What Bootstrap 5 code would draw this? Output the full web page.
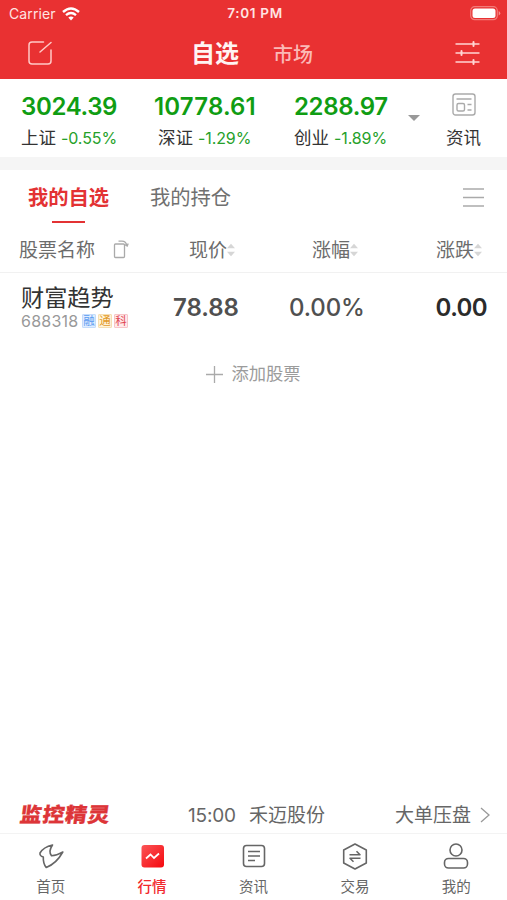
<!DOCTYPE html>
<html lang="zh-CN">
<head>
<meta charset="utf-8">
<meta name="viewport" content="width=device-width, initial-scale=1">
<title>自选</title>
<link href="https://cdn.jsdelivr.net/npm/bootstrap@5.3.0/dist/css/bootstrap.min.css" rel="stylesheet">
<style>
  body { font-family: Inter, "Noto Sans CJK SC", sans-serif; color: #333; height: 900px; overflow: hidden; white-space: nowrap; }
  svg { display: block; flex: none; fill: none; }
  .top-red { background: #e93132; height: 79px; }
  .status { height: 27px; padding: 0 6px 0 9px; font-size: 14px; line-height: 27px; color: #ffe4e2; }
  .status > * { flex: 1 1 0; }
  .carrier { width: 53px; letter-spacing: .1px; }
  .clock { font-weight: 600; font-size: 13.5px; letter-spacing: .7px; }
  .titlebar { height: 52px; padding: 0 27px 0 28px; line-height: 52px; }
  .title-on { font-size: 24px; font-weight: 700; margin-left: 139px; width: 82px; color: #fff4f3; padding-top: 2px; }
  .title-off { font-size: 20px; font-weight: 500; color: #fbb9b6; padding-top: 4px; }
  .indices { height: 78px; padding: 13px 0 0 21px; }
  .idx-num { font-size: 24px; font-weight: 600; line-height: 29px; color: #109d13; letter-spacing: -.35px; }
  .idx-num.long { letter-spacing: .15px; }
  .idx-lab { font-size: 17.5px; line-height: 33px; color: #333; }
  .idx-lab span { font-size: 16px; color: #26a12a; margin-left: 5px; letter-spacing: -.1px; }
  .w-a { width: 133px; } .w-b { width: 140px; } .w-c { width: 114px; }
  .news { padding-right: 2px; }
  .band { height: 13px; background: #f5f5f5; }
  .tabs { height: 56px; padding: 0 23px 0 28px; font-size: 20.3px; line-height: 55px; }
  .tab-on { color: #e33234; font-weight: 700; width: 122px; }
  .tab-on i { display: block; width: 33px; height: 2px; background: #e33234; margin: -4px 0 0 24px; }
  .tab-off { color: #707070; }
  .thead-row { height: 47px; padding: 2px 0 0 19px; font-size: 19px; line-height: 45px; color: #6c6c6c; border-bottom: 1px solid #f1f1f1; }
  .th-name { width: 170px; } .th-price { width: 123px; } .th-pct { width: 124px; }
  .swap { margin-left: 18px; }
  .stock { height: 68px; padding: 13px 20px 0 21px; }
  .s-info { width: 152px; }
  .s-name { font-size: 23.2px; line-height: 25px; color: #333; }
  .s-code { font-size: 16px; line-height: 20px; color: #999; letter-spacing: .25px; }
  .s-code > :first-child { width: 61px; }
  .tag { width: 14px; height: 14px; font-size: 11.5px; line-height: 12px; border: 1px solid; text-align: center; border-radius: 1px; letter-spacing: 0; margin-right: 2px; }
  .tag-b { color: #5b9bf0; background: #dfedff; border-color: #c4dcfb; }
  .tag-o { color: #e29b2b; background: #fff3da; border-color: #f5dfb4; }
  .tag-r { color: #e04450; background: #ffe9ea; border-color: #f7c5c8; }
  .s-val { font-size: 24px; font-weight: 600; line-height: 43px; color: #505050; letter-spacing: -.05px; }
  .s-price { width: 116px; }
  .s-pct { font-weight: 500; letter-spacing: -.1px; }
  .s-chg { font-weight: 600; color: #2b2b2b; letter-spacing: -.6px; }
  .add { height: 66px; font-size: 17.3px; line-height: 66px; color: #9b9b9b; }
  .ticker { height: 39px; padding: 2px 16px 0 20px; font-size: 19px; line-height: 37px; color: #666; border-bottom: 1px solid #f3f3f3; }
  .brand { font-size: 22px; font-weight: 900; color: #dd3538; transform: skewX(-8deg) scaleY(.92); width: 168px; -webkit-text-stroke: .3px; letter-spacing: .6px; }
  .tick-time { width: 61px; letter-spacing: -.2px; }
  .dock { height: 66px; font-size: 14.5px; color: #666; }
  .dock > div { flex: 1 1 0; padding-top: 9px; line-height: 33px; }
  .dock svg { stroke: #666; stroke-width: 1.6; }
  .dock .active { color: #f2282d; font-weight: 500; }
</style>
<script src="https://cdn.jsdelivr.net/npm/bootstrap@5.3.0/dist/js/bootstrap.bundle.min.js"></script>
</head>
<body class="bg-white d-flex flex-column">
<header class="top-red">
  <div class="status d-flex align-items-center">
    <div class="d-flex align-items-center"><span class="carrier">Carrier</span>
      <svg width="18" height="14" viewBox="0 0 18 14" stroke="#fff" stroke-width="2.4"><path d="M1 5Q9-2 17 5M4 8.2Q9 4 14 8.2"/><path d="M6.3 10.6Q9 8.5 11.7 10.6L9 13.4z" fill="#fff" stroke="none"/></svg>
    </div>
    <div class="clock text-center">7:01 PM</div>
    <div class="d-flex justify-content-end">
      <svg width="31" height="15" viewBox="0 0 31 15"><rect x=".7" y=".7" width="26.6" height="13" rx="4" stroke="#f27b79" stroke-width="1.2"/><rect x="2.5" y="2.500" width="23" height="9.500" rx="2.500" fill="#fff"/><path d="M28.700 5v4.500q1.600-.7 1.600-2.250T28.700 5" fill="#f58f8d"/></svg>
    </div>
  </div>
  <div class="titlebar d-flex align-items-center">
    <svg width="24" height="24" viewBox="0 0 24 24" stroke="#ffc9c6" stroke-width="1.5" stroke-linecap="round"><path d="M15.500 1H4Q1 1 1 4V20Q1 23 4 23H20Q23 23 23 20V9M12 11L23 1.500"/></svg>
    <div class="title-on">自选</div>
    <div class="title-off">市场</div>
    <svg class="ms-auto" width="25" height="24" viewBox="0 0 25 24" stroke="#ffd5d3" stroke-width="1.4" stroke-linecap="round"><path d="M1 3H24M1 12H24M1 21H24"/><path d="M18.500 1v4M6.500 10v4M18.500 19v4" stroke-width="2"/></svg>
  </div>
</header>

<section class="indices d-flex">
  <div class="w-a"><div class="idx-num">3024.39</div><div class="idx-lab">上证<span>-0.55%</span></div></div>
  <div class="w-b"><div class="idx-num long">10778.61</div><div class="idx-lab ps-1">深证<span>-1.29%</span></div></div>
  <div class="w-c"><div class="idx-num">2288.97</div><div class="idx-lab">创业<span>-1.89%</span></div></div>
  <svg width="12" height="50" viewBox="0 0 12 50"><path d="M0 23H12L6 29z" fill="#999"/></svg>
  <div class="news ms-auto me-4 text-center">
    <svg class="mx-auto" width="24" height="29" viewBox="0 0 24 29" stroke="#aaa" stroke-width="1.4"><rect x="1" y="2" width="22" height="21" rx="2.500"/><path d="M4.500 7H19.500M15.500 12.500H19.500M15.500 18H19.500"/><rect x="5" y="11.500" width="7.500" height="7.500" rx="1.500"/></svg>
    <div class="idx-lab">资讯</div>
  </div>
</section>
<div class="band"></div>

<nav class="tabs d-flex">
  <div class="tab-on">我的自选<i></i></div>
  <div class="tab-off">我的持仓</div>
  <svg class="ms-auto mt-3" width="21" height="24" viewBox="0 0 21 24" stroke="#aaa" stroke-width="1.4"><path d="M0 3H21M0 11.500H21M0 20H21"/></svg>
</nav>

<svg class="d-none"><symbol id="sorter" viewBox="0 0 8 14"><path d="M0 5.200L4 .7 8 5.200zM0 8.800L4 13.300 8 8.800z" fill="#d6d6d6"/></symbol></svg>
<div class="thead-row d-flex align-items-center">
  <div class="th-name d-flex align-items-center">股票名称
    <svg class="swap" width="17" height="20" viewBox="0 0 17 20" stroke="#aaa" stroke-width="1.3"><rect x="1.500" y="4" width="10" height="13.500" rx="1"/><path d="M5.500 1.200H9Q13 1.200 14 6M11.500 4.500L14.200 6 15.200 3.500"/></svg>
  </div>
  <div class="th-price d-flex align-items-center">现价<svg width="8" height="14"><use href="#sorter"/></svg></div>
  <div class="th-pct d-flex align-items-center">涨幅<svg width="8" height="14"><use href="#sorter"/></svg></div>
  <div class="d-flex align-items-center">涨跌<svg width="8" height="14"><use href="#sorter"/></svg></div>
</div>

<div class="stock d-flex">
  <div class="s-info">
    <div class="s-name">财富趋势</div>
    <div class="s-code d-flex align-items-center"><span>688318</span><span class="tag tag-b">融</span><span class="tag tag-o">通</span><span class="tag tag-r">科</span></div>
  </div>
  <div class="s-val s-price">78.88</div>
  <div class="s-val s-pct">0.00%</div>
  <div class="s-val s-chg ms-auto">0.00</div>
</div>

<div class="add d-flex align-items-center justify-content-center">
  <svg class="me-2" width="17" height="17" viewBox="0 0 17 17" stroke="#aaa" stroke-width="1.3"><path d="M8.500 0V17M0 8.500H17"/></svg>添加股票
</div>

<div class="ticker mt-auto d-flex align-items-center">
  <div class="brand">监控精灵</div>
  <div class="tick-time">15:00</div>
  <div>禾迈股份</div>
  <div class="ms-auto me-2">大单压盘</div>
  <svg width="12" height="16" viewBox="0 0 12 16" stroke="#999" stroke-width="1.3"><path d="M2 1L10 8 2 15"/></svg>
</div>
<footer class="dock d-flex text-center">
  <div><svg class="mx-auto" width="26" height="27" viewBox="0 0 26 27" stroke-linejoin="round"><path d="M14.500 2Q5.500 4 2 10Q1.500 13 5.300 14Q5 20.500 8.200 24.500Q18.500 20.500 24.800 9Q18.500 12.500 13.500 12.800Q10 8.500 14.500 2z"/></svg>首页</div>
  <div class="active"><svg class="mx-auto" width="26" height="27" viewBox="0 0 26 27"><defs><linearGradient id="glow" x2="1" y2="1"><stop stop-color="#fb5557"/><stop offset="1" stop-color="#f5080e"/></linearGradient></defs><rect x="2.500" y="2" width="22.500" height="22.500" rx="3" fill="url(#glow)" stroke="none"/><path d="M7 15.500L11.500 11.500 15 15 20 10.500" stroke="#fff" stroke-width="1.700"/></svg>行情</div>
  <div><svg class="mx-auto" width="26" height="27" viewBox="0 0 26 27"><rect x="2.500" y="2.500" width="21" height="21" rx="3"/><path d="M7 8.500H19M7 13H19M7 17.500H14"/></svg>资讯</div>
  <div><svg class="mx-auto" width="26" height="27" viewBox="0 0 26 27" stroke-linejoin="round"><path d="M13 1L24.300 7V20L13 26 1.700 20V7z"/><path d="M7.500 11.800H18L14.500 8.300M18.500 15.200H8L11.500 18.700"/></svg>交易</div>
  <div><svg class="mx-auto" width="26" height="27" viewBox="0 0 26 27"><circle cx="13" cy="7" r="6"/><rect x="1.500" y="15.500" width="23" height="9.500" rx="4"/></svg>我的</div>
</footer>
</body>
</html>
